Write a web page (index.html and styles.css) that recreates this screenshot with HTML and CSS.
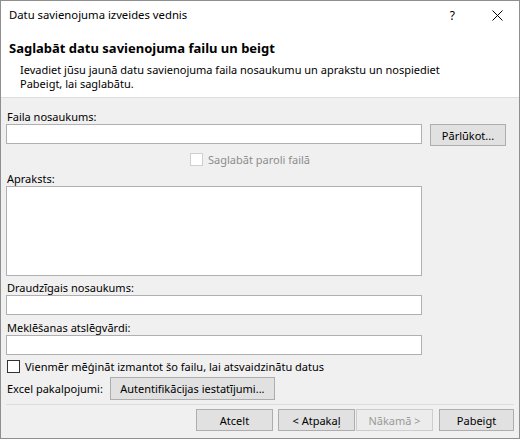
FILE: index.html
```html
<!DOCTYPE html>
<html lang="lv">
<head>
<meta charset="utf-8">
<title>Datu savienojuma izveides vednis</title>
<link rel="stylesheet" href="styles.css">
</head>
<body>
<div class="dialog">
  <div class="titlebar">
    <span class="title">Datu savienojuma izveides vednis</span>
    <span class="help">?</span>
    <svg class="close" width="11" height="11" viewBox="0 0 11 11">
      <path d="M0.5 0.5 L10.5 10.5 M10.5 0.5 L0.5 10.5" stroke="#000" stroke-width="1" fill="none"/>
    </svg>
  </div>
  <div class="header">
    <h1 class="heading">Saglabāt datu savienojuma failu un beigt</h1>
    <p class="intro">Ievadiet jūsu jaunā datu savienojuma faila nosaukumu un aprakstu un nospiediet<br>Pabeigt, lai saglabātu.</p>
  </div>
  <div class="content">
    <div class="label first">Faila nosaukums:</div>
    <div class="file-row">
      <div class="field"></div>
      <button class="btn browse">Pārlūkot...</button>
    </div>
    <div class="check-row save-pass">
      <span class="box"></span>
      <span>Saglabāt paroli failā</span>
    </div>
    <div class="label">Apraksts:</div>
    <div class="field area"></div>
    <div class="label">Draudzīgais nosaukums:</div>
    <div class="field"></div>
    <div class="label keywords">Meklēšanas atslēgvārdi:</div>
    <div class="field"></div>
    <div class="check-row always">
      <span class="box"></span>
      <span>Vienmēr mēģināt izmantot šo failu, lai atsvaidzinātu datus</span>
    </div>
    <div class="services">
      <span>Excel pakalpojumi:</span>
      <button class="btn auth">Autentifikācijas iestatījumi...</button>
    </div>
  </div>
  <div class="footer">
    <button class="btn nav cancel">Atcelt</button>
    <button class="btn nav back">&lt; Atpakaļ</button>
    <button class="btn nav next" disabled>Nākamā &gt;</button>
    <button class="btn nav finish">Pabeigt</button>
  </div>
</div>
</body>
</html>
```

FILE: styles.css
```css
* {
  box-sizing: border-box;
}

html, body {
  margin: 0;
  padding: 0;
  background: #ffffff;
}

body {
  font-family: "Noto Sans", "Open Sans", sans-serif;
  font-size: 11px;
  color: #000;
}

.dialog {
  width: 520px;
  height: 439px;
  border: 1px solid #8f8f8f;
  background: #f0f0f0;
  display: flex;
  flex-direction: column;
}

.dialog > * {
  flex-shrink: 0;
}

/* window caption */
.titlebar {
  height: 28px;
  background: #fff;
  display: flex;
  align-items: center;
  padding-left: 8px;
}

.title {
  flex: 1;
  font-size: 11.3px;
  line-height: 16px;
}

.help {
  font-size: 12px;
  margin-right: 37px;
}

.close {
  margin-right: 16px;
}

/* white wizard header */
.header {
  background: #fff;
  height: 69px;
  border-bottom: 1px solid #dedede;
  padding: 10px 0 0 8px;
}

.heading {
  margin: 0;
  font-size: 13px;
  font-weight: bold;
  line-height: 18px;
}

.intro {
  margin: 6px 0 0 11px;
  line-height: 14px;
}

/* form body */
.content {
  height: 302px;
  padding: 0 0 0 5px;
}

.label {
  line-height: 15px;
  height: 15px;
  margin-top: 4px;
  padding-left: 1px;
}

.label.first {
  margin-top: 11px;
}

.label.keywords {
  margin-top: 5px;
}

.field {
  width: 416px;
  height: 20px;
  background: #fff;
  border: 1px solid #b0b0b0;
}

.field.area {
  height: 90px;
}

.file-row {
  display: flex;
  align-items: flex-start;
}

.btn {
  font-family: inherit;
  font-size: 11px;
  color: #000;
  background: #e1e1e1;
  border: 1px solid #adadad;
  padding: 0;
  margin: 0;
}

.browse {
  width: 76px;
  height: 22px;
  margin-left: 8px;
}

.check-row {
  display: flex;
  align-items: center;
  gap: 5px;
  height: 16px;
}

.box {
  width: 13px;
  height: 13px;
  border: 1px solid #333;
  background: #fff;
}

.save-pass {
  margin: 5px 0 0 184px;
  color: #8d8d8d;
}

.save-pass .box {
  border-color: #cfcfcf;
}

.always {
  margin-top: 3px;
  padding-left: 1px;
}

.services {
  display: flex;
  align-items: center;
  gap: 7px;
  margin-top: 3px;
  padding-left: 1px;
}

.auth {
  width: 165px;
  height: 23px;
}

/* wizard navigation */
.footer {
  margin: 4px 5px 0 5px;
  border-top: 1px solid #dcdcdc;
  padding-top: 4px;
  display: flex;
  justify-content: flex-end;
  height: 27px;
}

.nav {
  width: 77px;
  height: 22px;
}

.cancel {
  margin-right: 5px;
}

.next {
  margin-left: 1px;
  background: #ececec;
  border-color: #cdcdcd;
  color: #9a9a9a;
}

.finish {
  margin-left: 6px;
  width: 75px;
}
```
